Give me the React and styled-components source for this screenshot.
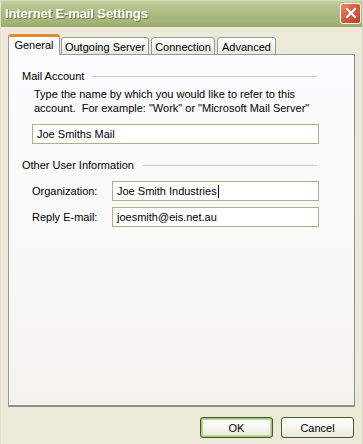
import React from "react";
import styled, { createGlobalStyle } from "styled-components";

const GlobalStyle = createGlobalStyle`
  html, body {
    margin: 0;
    padding: 0;
    background: #ece9d8;
  }
  body {
    font-family: "Liberation Sans", Arial, sans-serif;
    font-size: 11px;
    color: #000;
  }
`;

const Window = styled.div`
  width: 363px;
  height: 444px;
  display: flex;
  flex-direction: column;
  background: #ece9d8;
  box-sizing: border-box;
  border-left: 1px solid #e2dfcb;
  border-right: 1px solid #d8d5c2;
  overflow: hidden;
`;

const TitleBar = styled.div`
  height: 27px;
  flex: none;
  display: flex;
  align-items: center;
  justify-content: space-between;
  padding: 0 2px 0 5px;
  margin: 0 -1px;
  background: linear-gradient(
    to bottom,
    #dbe3bf 0,
    #bccb99 2px,
    #adbd84 45%,
    #a3b577 80%,
    #98aa6c 100%
  );
`;

const Title = styled.span`
  color: #fff;
  font-weight: bold;
  font-size: 13px;
  letter-spacing: -0.1px;
  text-shadow: 1px 1px 0 #6b7a45;
`;

const CloseButton = styled.div`
  width: 21px;
  height: 21px;
  margin-top: -1px;
  box-sizing: border-box;
  border: 1px solid #fff;
  border-radius: 3px;
  background: linear-gradient(135deg, #e98e6f 0%, #d65c3d 45%, #bf4026 100%);
  display: flex;
  align-items: center;
  justify-content: center;
`;

const Body = styled.div`
  flex: 1;
  display: flex;
  flex-direction: column;
  padding: 7px 7px 0 7px;
`;

const TabStrip = styled.div`
  display: flex;
  align-items: flex-end;
  height: 21px;
  position: relative;
  z-index: 1;
  margin-bottom: -1px;
`;

const Tab = styled.div`
  box-sizing: border-box;
  width: ${(p) => p.$w}px;
  height: ${(p) => (p.$active ? 21 : 18)}px;
  margin-right: ${(p) => (p.$active ? 1 : 2)}px;
  display: flex;
  align-items: center;
  justify-content: center;
  border: 1px solid #919b9c;
  border-bottom: ${(p) => (p.$active ? "none" : "1px solid #919b9c")};
  border-radius: 3px 3px 0 0;
  background: ${(p) =>
    p.$active ? "#fcfcfe" : "linear-gradient(to bottom, #fff 0%, #f3f3ef 60%, #e8e7e0 100%)"};
  border-top: ${(p) => (p.$active ? "3px solid #e68b2c" : "1px solid #919b9c")};
  padding-top: ${(p) => (p.$active ? 0 : 1)}px;
  padding-bottom: ${(p) => (p.$active ? 3 : 0)}px;
`;

const Panel = styled.div`
  width: 347px;
  height: 353px;
  box-sizing: border-box;
  border: 1px solid #919b9c;
  border-right-color: #8a9293;
  border-bottom: 2px solid #8a9293;
  background: linear-gradient(to bottom, #fcfcfe 0%, #f8f8f7 60%, #f3f2ec 100%);
  padding: 15px 35px 0 13px;
  display: flex;
  flex-direction: column;
`;

const GroupHeader = styled.div`
  display: flex;
  align-items: center;
  height: 13px;
  line-height: 13px;
  margin-top: ${(p) => p.$top || 0}px;
`;

const GroupLine = styled.div`
  flex: 1;
  height: 1px;
  background: #d0d0bf;
  margin: 0 2px 0 ${(p) => p.$gap}px;
`;

const Description = styled.p`
  margin: 4px 0 0 12px;
  line-height: 14px;
`;

const TextBox = styled.div`
  box-sizing: border-box;
  height: 20px;
  width: ${(p) => p.$w}px;
  border: 1px solid #a5b38a;
  background: #fff;
  padding: 0 4px;
  display: flex;
  align-items: center;
  margin-left: ${(p) => p.$left || 0}px;
  margin-top: ${(p) => p.$top || 0}px;
`;

const Caret = styled.span`
  display: inline-block;
  width: 1px;
  height: 13px;
  background: #000;
  margin-left: 1px;
`;

const FieldRow = styled.div`
  display: flex;
  align-items: center;
  margin-left: 10px;
  margin-top: ${(p) => p.$top}px;
`;

const FieldLabel = styled.span`
  width: 80px;
`;

const ButtonRow = styled.div`
  display: flex;
  justify-content: flex-end;
  gap: 8px;
  padding: 10px 1px 0 0;
`;

const Button = styled.button`
  width: 73px;
  height: 21px;
  box-sizing: border-box;
  font-family: inherit;
  font-size: 11px;
  color: #000;
  border: 1px solid #3c5d26;
  border-radius: 3px;
  background: linear-gradient(to bottom, #fff 0%, #f6f6f0 50%, #e9e8dd 100%);
  box-shadow: ${(p) =>
    p.$default ? "inset 0 0 0 1px #a9c07a, inset 0 0 0 2px #c5d6a0" : "none"};
  padding: 0;
`;

const tabs = [
  { label: "General", w: 52, active: true },
  { label: "Outgoing Server", w: 88 },
  { label: "Connection", w: 64 },
  { label: "Advanced", w: 59 },
];

export default function App() {
  return (
    <Window>
      <GlobalStyle />
      <TitleBar>
        <Title>Internet E-mail Settings</Title>
        <CloseButton>
          <svg width="12" height="12" viewBox="0 0 12 12">
            <path d="M2 2 L10 10 M10 2 L2 10" stroke="#fff" strokeWidth="2.2" strokeLinecap="square" />
          </svg>
        </CloseButton>
      </TitleBar>
      <Body>
        <TabStrip>
          {tabs.map((t) => (
            <Tab key={t.label} $w={t.w} $active={t.active}>
              {t.label}
            </Tab>
          ))}
        </TabStrip>
        <Panel>
          <GroupHeader>
            Mail Account
            <GroupLine $gap={8} />
          </GroupHeader>
          <Description>
            Type the name by which you would like to refer to this
            <br />
            account.&nbsp; For example: "Work" or "Microsoft Mail Server"
          </Description>
          <TextBox $w={287} $left={10} $top={9}>
            Joe Smiths Mail
          </TextBox>
          <GroupHeader $top={15}>
            Other User Information
            <GroupLine $gap={8} />
          </GroupHeader>
          <FieldRow $top={9}>
            <FieldLabel>Organization:</FieldLabel>
            <TextBox $w={207}>
              Joe Smith Industries
              <Caret />
            </TextBox>
          </FieldRow>
          <FieldRow $top={6}>
            <FieldLabel>Reply E-mail:</FieldLabel>
            <TextBox $w={207}>joesmith@eis.net.au</TextBox>
          </FieldRow>
        </Panel>
        <ButtonRow>
          <Button $default>OK</Button>
          <Button>Cancel</Button>
        </ButtonRow>
      </Body>
    </Window>
  );
}
